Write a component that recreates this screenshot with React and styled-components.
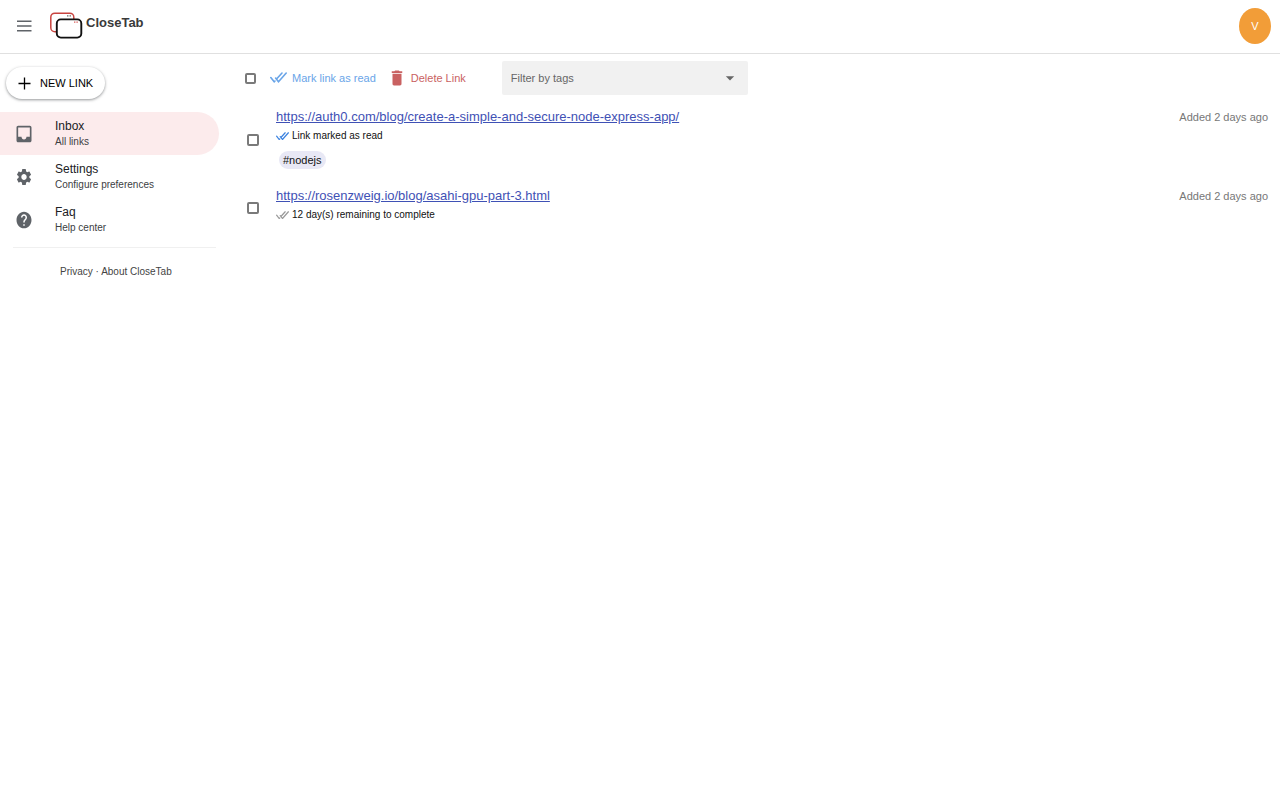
import React from 'react';
import styled, { createGlobalStyle } from 'styled-components';
import { MdInbox, MdSettings, MdHelp, MdDelete, MdArrowDropDown } from 'react-icons/md';

const GlobalStyle = createGlobalStyle`
  * {
    box-sizing: border-box;
  }

  body {
    margin: 0;
    background: #fff;
    color: #111;
    font-family: "Liberation Sans", Arial, sans-serif;
    font-size: 12px;
  }

  button, select {
    font-family: inherit;
  }
`;

const Header = styled.header`
  display: flex;
  align-items: center;
  height: 54px;
  padding: 0 9px 2px 17px;
  border-bottom: 1px solid #e0e0e0;
`;

const MenuButton = styled.button`
  display: flex;
  padding: 0;
  border: none;
  background: none;
  color: #5f6368;
  cursor: pointer;
`;

const Brand = styled.a`
  display: flex;
  align-items: flex-start;
  gap: 3px;
  margin-left: 17px;
  color: #3a3a3a;
  font-size: 13px;
  font-weight: bold;
  line-height: 22px;
  text-decoration: none;
`;

const Avatar = styled.button`
  width: 32px;
  height: 36px;
  margin-left: auto;
  padding: 0;
  border: none;
  border-radius: 50%;
  background: #f29d38;
  color: #fff;
  font-size: 11px;
  cursor: pointer;
`;

const Body = styled.div`
  display: flex;
`;

const Sidebar = styled.aside`
  width: 219px;
  flex-shrink: 0;
  padding-top: 13px;
`;

const NewLinkButton = styled.button`
  display: flex;
  align-items: center;
  gap: 9px;
  height: 32px;
  margin: 0 0 13px 6px;
  padding: 0 12px;
  border: none;
  border-radius: 16px;
  background: #fff;
  box-shadow: 0 1px 3px rgba(60, 64, 67, 0.55);
  color: #000;
  font-size: 11px;
  font-weight: 500;
  white-space: nowrap;
  cursor: pointer;
`;

const NavItem = styled.a`
  display: flex;
  align-items: center;
  height: 43px;
  border-radius: 0 22px 22px 0;
  background: ${props => props.$active ? '#fcebec' : 'transparent'};
  color: #3c4043;
  text-decoration: none;
`;

const NavIcon = styled.span`
  display: flex;
  justify-content: center;
  width: 48px;
  margin-right: 7px;
  color: #5f6368;

  svg {
    width: ${props => props.$large ? '20px' : '18px'};
    height: ${props => props.$large ? '22px' : '20px'};
  }
`;

const NavTitle = styled.div`
  color: #202124;
  font-size: 12px;
  font-weight: 500;
  line-height: 16px;
`;

const NavText = styled.div`
  font-size: 10px;
  line-height: 15px;
`;

const Divider = styled.hr`
  height: 1px;
  margin: 6px 3px 0 13px;
  border: none;
  background: #f0f0f0;
`;

const FooterLinks = styled.footer`
  margin-top: 16px;
  padding-left: 60px;
  color: #444;
  font-size: 10px;
  line-height: 16px;

  a {
    color: inherit;
    text-decoration: none;
  }
`;

const Main = styled.main`
  flex: 1;
  min-width: 0;
  padding: 7px 12px 0 26px;
`;

const Toolbar = styled.div`
  display: flex;
  align-items: center;
  height: 34px;
`;

const Checkbox = styled.input`
  appearance: none;
  width: ${props => props.$small ? '11px' : '12px'};
  height: ${props => props.$small ? '11px' : '12px'};
  flex-shrink: 0;
  margin: 0;
  border: 2px solid #7a7a7a;
  border-radius: 2px;
  background: #fff;

  &:checked {
    background: #7a7a7a;
  }
`;

const ActionButton = styled.button`
  display: flex;
  align-items: center;
  gap: 5px;
  margin-left: ${props => props.$danger ? '12px' : '14px'};
  padding: 0;
  border: none;
  background: none;
  color: ${props => props.$danger ? '#c96161' : '#6aa5e8'};
  font-size: 11px;
  white-space: nowrap;
  cursor: pointer;
`;

const DeleteIcon = styled(MdDelete)`
  width: 18px;
  height: 20px;
`;

const Filter = styled.div`
  display: grid;
  align-items: center;
  width: 246px;
  height: 34px;
  margin-left: 36px;
  border-radius: 2px;
  background: #f1f1f1;
  color: #666;

  select, svg {
    grid-area: 1 / 1;
  }

  svg {
    justify-self: end;
    margin-right: 8px;
    pointer-events: none;
  }
`;

const FilterSelect = styled.select`
  appearance: none;
  width: 100%;
  height: 34px;
  padding: 0 30px 0 9px;
  border: none;
  background: none;
  color: #666;
  font-size: 11px;
`;

const LinkList = styled.ul`
  display: grid;
  gap: 18px;
  margin: 13px 0 0;
  padding: 0;
  list-style: none;
`;

const LinkRow = styled.li`
  display: flex;
  align-items: flex-start;
`;

const CheckCell = styled.div`
  display: flex;
  align-items: center;
  align-self: stretch;
  width: 31px;
  padding: 3px 0 0 2px;
`;

const LinkBody = styled.div`
  flex: 1;
  min-width: 0;
`;

const LinkUrl = styled.a`
  display: block;
  width: fit-content;
  color: #3f51b5;
  font-size: 13px;
  line-height: 18px;
`;

const Status = styled.div`
  display: flex;
  align-items: center;
  gap: 3px;
  font-size: 10px;
  line-height: 20px;
`;

const Tag = styled.span`
  display: block;
  width: fit-content;
  margin: 5px 0 0 3px;
  padding: 0 4px;
  border-radius: 9px;
  background: #e8e8f5;
  font-size: 11px;
  line-height: 18px;
`;

const Added = styled.time`
  color: #777;
  font-size: 11px;
  line-height: 18px;
`;

const MenuIcon = () => (
  <svg width="15" height="12" viewBox="0 0 15 12" stroke="currentColor" strokeWidth="1.5">
    <path d="M0 1.2H14.5M0 6H14.5M0 10.8H14.5" />
  </svg>
);

const PlusIcon = () => (
  <svg width="13" height="13" viewBox="0 0 13 13" stroke="currentColor" strokeWidth="1.3">
    <path d="M6.5 .5V12.5M.5 6.5H12.5" />
  </svg>
);

const Logo = () => (
  <svg width="34" height="28" viewBox="0 0 34 28" fill="none">
    <rect x="1.8" y="1.2" width="23" height="18.5" rx="4" stroke="#c8433f" strokeWidth="1.5" />
    <path d="M18.2 3.8H19.4M20.6 3.8H21.8" stroke="#444" strokeWidth="1.3" />
    <rect x="7.8" y="7.4" width="24.5" height="18.2" rx="4" fill="#fff" stroke="#111" strokeWidth="1.9" />
    <path d="M25 10.2H26.4M27.4 10.2H28.8" stroke="#d9625f" strokeWidth="1.3" />
  </svg>
);

const DoubleCheck = ({ width, color }) => (
  <svg
    width={width}
    height={width * 0.65}
    viewBox="0 0 17 11"
    fill="none"
    stroke={color}
    strokeWidth="1.6"
    strokeLinecap="round"
  >
    <path d="M.8 5.5L4.2 9.8L5 9M7 6.5L12 1M5.6 6L8.5 9.8L16.2 1" />
  </svg>
);

const navItems = [
  { title: 'Inbox', text: 'All links', Icon: MdInbox, large: true, active: true },
  { title: 'Settings', text: 'Configure preferences', Icon: MdSettings },
  { title: 'Faq', text: 'Help center', Icon: MdHelp },
];

const links = [
  {
    url: 'https://auth0.com/blog/create-a-simple-and-secure-node-express-app/',
    status: 'Link marked as read',
    read: true,
    tags: ['#nodejs'],
    added: 'Added 2 days ago',
  },
  {
    url: 'https://rosenzweig.io/blog/asahi-gpu-part-3.html',
    status: '12 day(s) remaining to complete',
    read: false,
    tags: [],
    added: 'Added 2 days ago',
  },
];

const App = () => {
  return (
    <>
      <GlobalStyle />
      <Header>
        <MenuButton aria-label="Menu"><MenuIcon /></MenuButton>
        <Brand href="#">
          <Logo />
          CloseTab
        </Brand>
        <Avatar>V</Avatar>
      </Header>

      <Body>
        <Sidebar>
          <NewLinkButton><PlusIcon /> NEW LINK</NewLinkButton>
          <nav>
            {navItems.map(({ title, text, Icon, large, active }) => (
              <NavItem key={title} href="#" $active={active}>
                <NavIcon $large={large}><Icon preserveAspectRatio="none" /></NavIcon>
                <div>
                  <NavTitle>{title}</NavTitle>
                  <NavText>{text}</NavText>
                </div>
              </NavItem>
            ))}
          </nav>
          <Divider />
          <FooterLinks>
            <a href="#">Privacy</a> · <a href="#">About CloseTab</a>
          </FooterLinks>
        </Sidebar>

        <Main>
          <Toolbar>
            <Checkbox type="checkbox" aria-label="Select all links" $small />
            <ActionButton>
              <DoubleCheck width={17} color="#6aa5e8" />
              Mark link as read
            </ActionButton>
            <ActionButton $danger>
              <DeleteIcon preserveAspectRatio="none" />
              Delete Link
            </ActionButton>
            <Filter>
              <FilterSelect aria-label="Filter by tags">
                <option>Filter by tags</option>
              </FilterSelect>
              <MdArrowDropDown size={20} />
            </Filter>
          </Toolbar>

          <LinkList>
            {links.map(link => (
              <LinkRow key={link.url}>
                <CheckCell>
                  <Checkbox type="checkbox" aria-label={link.url} />
                </CheckCell>
                <LinkBody>
                  <LinkUrl href={link.url}>{link.url}</LinkUrl>
                  <Status>
                    <DoubleCheck width={13} color={link.read ? '#3b82e0' : '#999'} />
                    {link.status}
                  </Status>
                  {link.tags.map(tag => <Tag key={tag}>{tag}</Tag>)}
                </LinkBody>
                <Added>{link.added}</Added>
              </LinkRow>
            ))}
          </LinkList>
        </Main>
      </Body>
    </>
  );
};

export default App;
